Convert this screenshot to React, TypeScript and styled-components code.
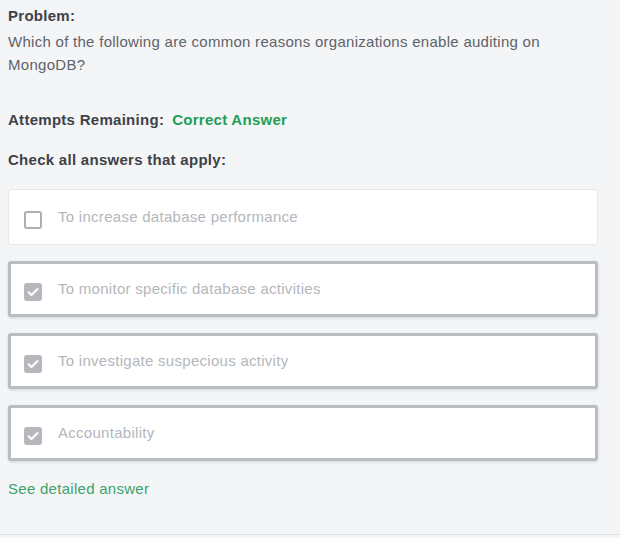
import React from "react";
import styled, { createGlobalStyle } from "styled-components";

const Global = createGlobalStyle`
  html, body { margin: 0; padding: 0; background: #f4f5f7; }
  body { font-family: "Liberation Sans", Arial, sans-serif; }
`;

const Page = styled.div`
  padding: 4px 22px 33px 8px;
  border-bottom: 1px solid #dcdee1;
  background: #f4f5f7;
  letter-spacing: 0.28px;
`;

const Label = styled.div`
  font-size: 15px;
  line-height: 24px;
  font-weight: bold;
  color: #3e4248;
`;

const Question = styled.p`
  margin: 2px 0 0;
  font-size: 15px;
  line-height: 23px;
  color: #5f6369;
`;

const Row = styled.div<{ $gap: number }>`
  margin-top: ${(p) => p.$gap}px;
  display: flex;
  gap: 8px;
  font-size: 15px;
  line-height: 24px;
  font-weight: bold;
  color: #3e4248;
`;

const Green = styled.span`
  color: #1f9e55;
`;

const List = styled.div`
  margin-top: 17px;
  display: flex;
  flex-direction: column;
  gap: 16px;
`;

const Card = styled.label<{ $selected: boolean }>`
  box-sizing: border-box;
  height: 56px;
  display: flex;
  align-items: center;
  gap: 16px;
  background: #ffffff;
  border-radius: 3px;
  border: ${(p) => (p.$selected ? "3px solid #b9bdc1" : "1px solid #e6e8eb")};
  padding-left: ${(p) => (p.$selected ? 13 : 15)}px;
  box-shadow: ${(p) => (p.$selected ? "0 1px 3px rgba(0,0,0,0.14)" : "none")};
`;

const Box = styled.span<{ $checked: boolean }>`
  box-sizing: border-box;
  flex: none;
  width: 18px;
  height: 18px;
  margin-top: 6px;
  border-radius: 3px;
  display: flex;
  align-items: center;
  justify-content: center;
  border: ${(p) => (p.$checked ? "none" : "2px solid #abafb3")};
  background: ${(p) => (p.$checked ? "#b5b9be" : "#ffffff")};
`;

const OptionText = styled.span`
  font-size: 15px;
  line-height: 24px;
  color: #b3b7bb;
`;

const Link = styled.a`
  display: block;
  margin-top: 16px;
  font-size: 15px;
  line-height: 24px;
  color: #3ea36c;
  text-decoration: none;
`;

const options = [
  { text: "To increase database performance", checked: false },
  { text: "To monitor specific database activities", checked: true },
  { text: "To investigate suspecious activity", checked: true },
  { text: "Accountability", checked: true },
];

export default function App() {
  return (
    <>
      <Global />
      <Page>
        <Label>Problem:</Label>
        <Question>
          Which of the following are common reasons organizations enable auditing on MongoDB?
        </Question>
        <Row $gap={32}>
          <span>Attempts Remaining:</span>
          <Green>Correct Answer</Green>
        </Row>
        <Row $gap={16}>Check all answers that apply:</Row>
        <List>
          {options.map((o) => (
            <Card key={o.text} $selected={o.checked}>
              <Box $checked={o.checked}>
                {o.checked && (
                  <svg width="12" height="10" viewBox="0 0 12 10">
                    <path d="M1.5 5.2 L4.5 8 L10.5 2" fill="none" stroke="#ffffff" strokeWidth="2" strokeLinecap="round" strokeLinejoin="round" />
                  </svg>
                )}
              </Box>
              <OptionText>{o.text}</OptionText>
            </Card>
          ))}
        </List>
        <Link href="#">See detailed answer</Link>
      </Page>
    </>
  );
}
